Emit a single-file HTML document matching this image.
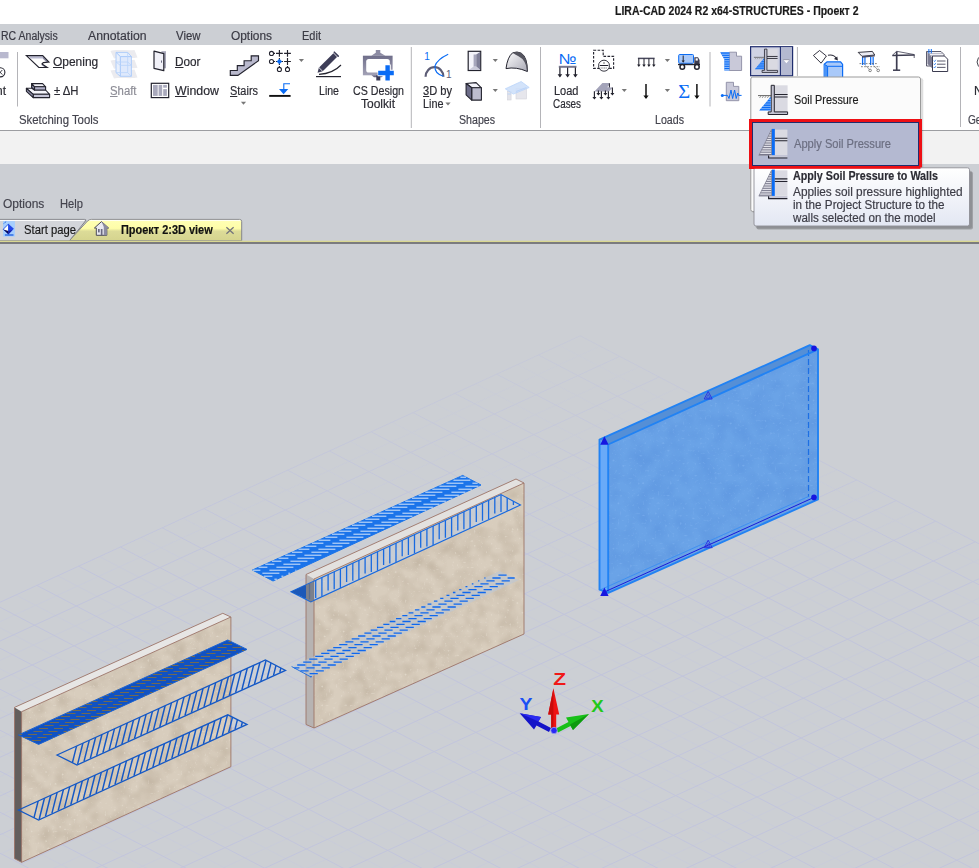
<!DOCTYPE html>
<html lang="en"><head><meta charset="utf-8"><title>LIRA-CAD 2024 R2 x64-STRUCTURES - Проект 2</title>
<style>
html,body{margin:0;padding:0}
body{width:979px;height:868px;position:relative;overflow:hidden;background:#fff;font:12px "Liberation Sans", sans-serif}
.a{position:absolute}
.t{position:absolute;white-space:pre;font-size:12px;line-height:normal;transform-origin:0 0;-webkit-text-stroke:0.18px currentColor}
.t u{text-decoration:underline;text-underline-offset:1px}
svg{position:absolute;overflow:visible}
</style></head><body>

<div class="a" style="left:0;top:24px;width:979px;height:21px;background:#cccfd4"></div>
<div class="a" style="left:0;top:45px;width:979px;height:85px;background:#fff"></div>
<div class="a" style="left:0;top:130px;width:979px;height:1px;background:#9c9da1"></div>
<div class="a" style="left:0;top:131px;width:979px;height:33px;background:#f2f2f2"></div>
<div class="a" style="left:0;top:164px;width:979px;height:704px;background:#cccfd4"></div>

<svg width="979" height="868" viewBox="0 0 979 868" style="left:0;top:0">
<defs><clipPath id="vp"><rect x="0" y="243" width="979" height="625"/></clipPath>
<filter id="nz" x="0" y="0" width="100%" height="100%" color-interpolation-filters="sRGB"><feTurbulence type="fractalNoise" baseFrequency="0.42" numOctaves="1" seed="3" result="n"/><feColorMatrix in="n" type="matrix" values="0 0 0 0 0.91  0 0 0 0 0.88  0 0 0 0 0.83  3 0 0 0 -1.9" result="w"/><feComposite in="w" in2="SourceGraphic" operator="in" result="wc"/><feTurbulence type="fractalNoise" baseFrequency="0.07" numOctaves="2" seed="8" result="n2"/><feColorMatrix in="n2" type="matrix" values="0 0 0 0 0.66  0 0 0 0 0.60  0 0 0 0 0.52  0 0.7 0 0 -0.24" result="d"/><feComposite in="d" in2="SourceGraphic" operator="in" result="dc"/><feMerge><feMergeNode in="SourceGraphic"/><feMergeNode in="dc"/><feMergeNode in="wc"/></feMerge></filter>
<filter id="nzb" x="0" y="0" width="100%" height="100%" color-interpolation-filters="sRGB"><feTurbulence type="fractalNoise" baseFrequency="0.4" numOctaves="1" seed="5" result="n"/><feColorMatrix in="n" type="matrix" values="0 0 0 0 0.50  0 0 0 0 0.70  0 0 0 0 0.94  3 0 0 0 -1.85" result="w"/><feComposite in="w" in2="SourceGraphic" operator="in" result="wc"/><feTurbulence type="fractalNoise" baseFrequency="0.06" numOctaves="2" seed="11" result="n2"/><feColorMatrix in="n2" type="matrix" values="0 0 0 0 0.30  0 0 0 0 0.52  0 0 0 0 0.84  0 0.6 0 0 -0.21" result="d"/><feComposite in="d" in2="SourceGraphic" operator="in" result="dc"/><feMerge><feMergeNode in="SourceGraphic"/><feMergeNode in="dc"/><feMergeNode in="wc"/></feMerge></filter>
<linearGradient id="fog" x1="0" y1="0" x2="0" y2="1"><stop offset="0" stop-color="#cccfd4" stop-opacity="0.7"/><stop offset="0.3" stop-color="#cccfd4" stop-opacity="0.5"/><stop offset="1" stop-color="#cccfd4" stop-opacity="0"/></linearGradient>
</defs>
<g clip-path="url(#vp)">
<path d="M559.3 345.4L1349.3 757.4M600.0 346.1L-236.0 730.1M517.5 364.6L1307.5 776.6M639.5 366.7L-196.5 750.7M475.7 383.8L1265.7 795.8M679.0 387.3L-157.0 771.3M433.9 403.0L1223.9 815.0M718.5 407.9L-117.5 791.9M392.1 422.2L1182.1 834.2M758.0 428.5L-78.0 812.5M350.3 441.4L1140.3 853.4M797.5 449.1L-38.5 833.1M308.5 460.6L1098.5 872.6M837.0 469.7L1.0 853.7M266.7 479.8L1056.7 891.8M876.5 490.3L40.5 874.3M224.9 499.0L1014.9 911.0M916.0 510.9L80.0 894.9M183.1 518.2L973.1 930.2M955.5 531.5L119.5 915.5M141.3 537.4L931.3 949.4M995.0 552.1L159.0 936.1M99.5 556.6L889.5 968.6M1034.5 572.7L198.5 956.7M57.7 575.8L847.7 987.8M1074.0 593.3L238.0 977.3M15.9 595.0L805.9 1007.0M1113.5 613.9L277.5 997.9M-25.9 614.2L764.1 1026.2M1153.0 634.5L317.0 1018.5M-67.7 633.4L722.3 1045.4M1192.5 655.1L356.5 1039.1M-109.5 652.6L680.5 1064.6M1232.0 675.7L396.0 1059.7M-151.3 671.8L638.7 1083.8M1271.5 696.3L435.5 1080.3M-193.1 691.0L596.9 1103.0M1311.0 716.9L475.0 1100.9M-234.9 710.2L555.1 1122.2M1350.5 737.5L514.5 1121.5" stroke="#c9ccd9" stroke-width="1" fill="none"/>
<path d="M580.2 335.8L1370.2 747.8M580.2 335.8L-255.8 719.8M538.4 355.0L1328.4 767.0M619.7 356.4L-216.3 740.4M496.6 374.2L1286.6 786.2M659.2 377.0L-176.8 761.0M454.8 393.4L1244.8 805.4M698.7 397.6L-137.3 781.6M413.0 412.6L1203.0 824.6M738.2 418.2L-97.8 802.2M371.2 431.8L1161.2 843.8M777.7 438.8L-58.3 822.8M329.4 451.0L1119.4 863.0M817.2 459.4L-18.8 843.4M287.6 470.2L1077.6 882.2M856.7 480.0L20.7 864.0M245.8 489.4L1035.8 901.4M896.2 500.6L60.2 884.6M204.0 508.6L994.0 920.6M935.7 521.2L99.7 905.2M162.2 527.8L952.2 939.8M975.2 541.8L139.2 925.8M120.4 547.0L910.4 959.0M1014.7 562.4L178.7 946.4M78.6 566.2L868.6 978.2M1054.2 583.0L218.2 967.0M36.8 585.4L826.8 997.4M1093.7 603.6L257.7 987.6M-5.0 604.6L785.0 1016.6M1133.2 624.2L297.2 1008.2M-46.8 623.8L743.2 1035.8M1172.7 644.8L336.7 1028.8M-88.6 643.0L701.4 1055.0M1212.2 665.4L376.2 1049.4M-130.4 662.2L659.6 1074.2M1251.7 686.0L415.7 1070.0M-172.2 681.4L617.8 1093.4M1291.2 706.6L455.2 1090.6M-214.0 700.6L576.0 1112.6M1330.7 727.2L494.7 1111.2M-255.8 719.8L534.2 1131.8M1370.2 747.8L534.2 1131.8" stroke="#c2c5dc" stroke-width="1" fill="none"/>
<rect x="0" y="243" width="979" height="330" fill="url(#fog)"/>
<clipPath id="c1"><polygon points="252.4,570.0 462.7,475.4 481.0,485.0 273.0,581.0"/></clipPath>
<polygon points="252.4,570.0 462.7,475.4 481.0,485.0 273.0,581.0" fill="#1b74ea" stroke="#1b74ea" stroke-width="1"/>
<path d="M460.4 477.2H466.1M453.4 480.2H470.4M446.4 483.2H463.4M472.4 483.2H477.6M439.4 486.2H456.4M465.4 486.2H478.4M432.4 489.2H449.4M458.4 489.2H471.9M425.4 492.2H442.4M451.4 492.2H465.4M418.7 495.2H435.4M444.4 495.2H458.9M412.0 498.2H428.4M437.4 498.2H452.4M405.3 501.2H421.4M430.4 501.2H445.9M398.7 504.2H414.4M423.4 504.2H439.4M392.0 507.2H407.4M416.4 507.2H432.9M385.3 510.2H400.4M409.4 510.2H426.4M378.7 513.2H393.4M402.4 513.2H419.4M372.0 516.2H386.4M395.4 516.2H412.4M365.3 519.2H379.4M388.4 519.2H405.4M358.7 522.2H372.4M381.4 522.2H398.4M352.0 525.2H365.4M374.4 525.2H391.4M345.3 528.2H358.4M367.4 528.2H384.4M338.7 531.2H351.4M360.4 531.2H377.4M332.0 534.2H344.4M353.4 534.2H370.4M325.3 537.2H337.4M346.4 537.2H363.4M318.6 540.2H330.4M339.4 540.2H356.4M312.0 543.2H323.4M332.4 543.2H349.4M305.3 546.2H316.4M325.4 546.2H342.4M298.6 549.2H309.4M318.4 549.2H335.4M292.0 552.2H302.4M311.4 552.2H328.4M285.3 555.2H295.4M304.4 555.2H321.4M278.6 558.2H288.4M297.4 558.2H314.4M272.0 561.2H281.4M290.4 561.2H307.4M265.3 564.2H274.4M283.4 564.2H300.4M258.6 567.2H267.4M276.4 567.2H293.4M252.8 570.2H260.4M269.4 570.2H286.4M295.4 570.2H296.4M262.4 573.2H279.4M288.4 573.2H289.9M264.0 576.2H272.4M281.4 576.2H283.4M274.4 579.2H276.9" stroke="#eef4fd" stroke-width="0.9" fill="none"/>
<polygon points="314.0,579.0 524.0,483.0 524.0,634.0 314.0,728.0" fill="#d8cdbd" filter="url(#nz)"/><polygon points="306.0,574.5 516.0,479.0 524.0,483.0 314.0,579.0" fill="#e3e1df"/><polygon points="306.0,574.5 314.0,579.0 314.0,728.0 306.0,724.5" fill="#b7b3b2"/><path d="M306.0,574.5L516.0,479.0L524.0,483.0L524.0,634.0L314.0,728.0L306.0,724.5Z M314.0,579.0L524.0,483.0 M314.0,579.0L314.0,728.0" fill="none" stroke="#9c7468" stroke-width="0.9"/>
<clipPath id="c2"><polygon points="291.0,591.8 501.0,494.6 520.5,505.0 310.8,601.8"/></clipPath>
<polygon points="291.0,591.8 501.0,494.6 520.5,505.0 310.8,601.8" fill="rgba(190,205,226,0.6)" stroke="#1769e0" stroke-width="1.1"/>
<path d="M297.2 587.9v18.5M303.4 585.1v20.0M309.5 582.2v17.0M315.7 579.4v18.5M321.9 576.5v20.0M328.1 573.6v17.0M334.2 570.8v18.5M340.4 567.9v20.0M346.6 565.1v17.0M352.8 562.2v18.5M358.9 559.4v20.0M365.1 556.5v17.0M371.3 553.6v18.5M377.5 550.8v20.0M383.6 547.9v17.0M389.8 545.1v18.5M396.0 542.2v20.0M402.2 539.3v17.0M408.4 536.5v18.5M414.5 533.6v20.0M420.7 530.8v17.0M426.9 527.9v18.5M433.1 525.0v20.0M439.2 522.2v17.0M445.4 519.3v18.5M451.6 516.5v20.0M457.8 513.6v17.0M463.9 510.8v18.5M470.1 507.9v20.0M476.3 505.0v17.0M482.5 502.2v18.5M488.6 499.3v20.0M494.8 496.5v17.0M501.0 493.6v18.5M507.2 490.7v20.0M513.4 487.9v17.0" stroke="#1769e0" stroke-width="1.3" fill="none" clip-path="url(#c2)"/>
<polygon points="291.0,591.8 306.0,585.0 306.0,598.8" fill="#1b58b8"/>
<polygon points="306.0,585.0 314.0,581.5 314.0,600.0 310.8,601.8 306.0,598.8" fill="#6b6f7a" opacity="0.8"/>
<clipPath id="c3"><polygon points="291.6,666.5 499.7,571.0 519.0,580.0 311.0,677.0"/></clipPath>
<polygon points="291.6,666.5 499.7,571.0 519.0,580.0 311.0,677.0" fill="rgba(186,198,214,0.6)"/>
<path d="M498.4 575.1H506.6M484.4 578.0H485.4M492.4 578.0H500.6M507.6 578.0H514.7M478.1 580.9H479.4M486.4 580.9H494.6M501.6 580.9H509.8M471.8 583.8H473.4M480.4 583.8H488.6M495.6 583.8H503.8M465.5 586.7H467.4M474.4 586.7H482.6M489.6 586.7H497.8M459.2 589.6H461.4M468.4 589.6H476.6M483.6 589.6H491.8M452.9 592.5H455.4M462.4 592.5H470.6M477.6 592.5H485.8M446.5 595.4H449.4M456.4 595.4H464.6M471.6 595.4H479.8M440.2 598.3H443.4M450.4 598.3H458.6M465.6 598.3H473.8M433.9 601.2H437.4M444.4 601.2H452.6M459.6 601.2H467.8M427.6 604.1H431.4M438.4 604.1H446.6M453.6 604.1H461.8M421.3 607.0H425.4M432.4 607.0H440.6M447.6 607.0H455.8M414.9 609.9H419.4M426.4 609.9H434.6M441.6 609.9H449.8M408.6 612.8H413.4M420.4 612.8H428.6M435.6 612.8H443.8M402.3 615.7H407.4M414.4 615.7H422.6M429.6 615.7H437.8M396.0 618.6H401.4M408.4 618.6H416.6M423.6 618.6H431.8M389.7 621.5H395.4M402.4 621.5H410.6M417.6 621.5H425.8M383.3 624.4H389.4M396.4 624.4H404.6M411.6 624.4H419.8M377.0 627.3H383.4M390.4 627.3H398.6M405.6 627.3H413.8M370.7 630.2H377.4M384.4 630.2H392.6M399.6 630.2H407.8M364.4 633.1H371.4M378.4 633.1H386.6M393.6 633.1H401.8M358.1 636.0H365.4M372.4 636.0H380.6M387.6 636.0H395.8M351.7 638.9H359.4M366.4 638.9H374.6M381.6 638.9H389.8M345.4 641.8H353.4M360.4 641.8H368.6M375.6 641.8H383.8M339.2 644.7H347.4M354.4 644.7H362.6M369.6 644.7H377.8M333.2 647.6H341.4M348.4 647.6H356.6M363.6 647.6H371.8M327.2 650.5H335.4M342.4 650.5H350.6M357.6 650.5H365.8M321.2 653.4H329.4M336.4 653.4H344.6M351.6 653.4H359.8M315.2 656.3H323.4M330.4 656.3H338.6M345.6 656.3H353.8M309.2 659.2H317.4M324.4 659.2H332.6M339.6 659.2H347.8M303.2 662.1H311.4M318.4 662.1H326.6M333.6 662.1H341.8M297.2 665.0H305.4M312.4 665.0H320.6M327.6 665.0H335.8M294.2 667.9H299.4M306.4 667.9H314.6M321.6 667.9H329.8M300.4 670.8H308.6M315.6 670.8H323.8M309.6 673.7H317.8M310.3 676.6H311.8" stroke="#0f68ee" stroke-width="1.3" fill="none"/>
<path d="M291.6,666.5L311.0,677.0" fill="none" stroke="#1769e0" stroke-width="0.9"/>
<polygon points="21.6,711.7 230.9,617.0 230.9,766.7 21.6,862.3" fill="#d8cdbd" filter="url(#nz)"/><polygon points="14.5,707.4 222.8,613.3 230.9,617.0 21.6,711.7" fill="#e7e6e5"/><polygon points="14.5,707.4 21.6,711.7 21.6,862.3 14.5,858.6" fill="#635e5d"/><path d="M14.5,707.4L222.8,613.3L230.9,617.0L230.9,766.7L21.6,862.3L14.5,858.6Z M21.6,711.7L230.9,617.0 M21.6,711.7L21.6,862.3" fill="none" stroke="#9c7468" stroke-width="0.9"/>
<clipPath id="ca"><polygon points="18.5,734.9 227.8,640.0 247.0,649.4 38.6,744.4"/></clipPath>
<polygon points="18.5,734.9 227.8,640.0 247.0,649.4 38.6,744.4" fill="#1152c2" stroke="#1a62d2" stroke-width="1"/>
<path d="M228.5 641.5H230.9M223.0 644.5H232.0M217.5 647.5H226.5M232.5 647.5H241.5M204.6 650.5H206.0M212.0 650.5H221.0M227.0 650.5H236.0M242.0 650.5H244.6M198.0 653.5H200.5M206.5 653.5H215.5M221.5 653.5H230.5M236.5 653.5H238.0M191.4 656.5H195.0M201.0 656.5H210.0M216.0 656.5H225.0M184.8 659.5H189.5M195.5 659.5H204.5M210.5 659.5H219.5M178.2 662.5H184.0M190.0 662.5H199.0M205.0 662.5H214.0M171.6 665.5H178.5M184.5 665.5H193.5M199.5 665.5H208.5M164.9 668.5H173.0M179.0 668.5H188.0M194.0 668.5H203.0M158.5 671.5H167.5M173.5 671.5H182.5M188.5 671.5H197.5M153.0 674.5H162.0M168.0 674.5H177.0M183.0 674.5H191.9M147.5 677.5H156.5M162.5 677.5H171.5M177.5 677.5H185.4M142.0 680.5H151.0M157.0 680.5H166.0M172.0 680.5H178.8M136.5 683.5H145.5M151.5 683.5H160.5M166.5 683.5H172.2M131.0 686.5H140.0M146.0 686.5H155.0M161.0 686.5H165.6M118.6 689.5H119.5M125.5 689.5H134.5M140.5 689.5H149.5M155.5 689.5H159.0M112.0 692.5H114.0M120.0 692.5H129.0M135.0 692.5H144.0M150.0 692.5H152.5M105.4 695.5H108.5M114.5 695.5H123.5M129.5 695.5H138.5M144.5 695.5H145.9M98.8 698.5H103.0M109.0 698.5H118.0M124.0 698.5H133.0M92.2 701.5H97.5M103.5 701.5H112.5M118.5 701.5H127.5M85.5 704.5H92.0M98.0 704.5H107.0M113.0 704.5H122.0M78.9 707.5H86.5M92.5 707.5H101.5M107.5 707.5H116.5M72.3 710.5H81.0M87.0 710.5H96.0M102.0 710.5H111.0M66.5 713.5H75.5M81.5 713.5H90.5M96.5 713.5H105.5M61.0 716.5H70.0M76.0 716.5H85.0M91.0 716.5H99.8M55.5 719.5H64.5M70.5 719.5H79.5M85.5 719.5H93.2M50.0 722.5H59.0M65.0 722.5H74.0M80.0 722.5H86.6M44.5 725.5H53.5M59.5 725.5H68.5M74.5 725.5H80.1M39.0 728.5H48.0M54.0 728.5H63.0M69.0 728.5H73.5M26.0 731.5H27.5M33.5 731.5H42.5M48.5 731.5H57.5M63.5 731.5H66.9M19.4 734.5H22.0M28.0 734.5H37.0M43.0 734.5H52.0M58.0 734.5H60.3M24.0 737.5H31.5M37.5 737.5H46.5M52.5 737.5H53.7M32.0 740.5H41.0" stroke="#7d6d45" stroke-width="0.9" fill="none"/>
<clipPath id="cb0"><polygon points="57.0,755.0 265.4,660.0 285.5,670.4 77.0,765.0"/></clipPath>
<path d="M71.3 767.1l6 -24M77.6 764.3l6 -24M84.0 761.4l6 -24M90.3 758.5l6 -24M96.6 755.7l6 -24M102.9 752.8l6 -24M109.2 749.9l6 -24M115.5 747.1l6 -24M121.9 744.2l6 -24M128.2 741.3l6 -24M134.5 738.5l6 -24M140.8 735.6l6 -24M147.1 732.7l6 -24M153.5 729.9l6 -24M159.8 727.0l6 -24M166.1 724.1l6 -24M172.4 721.3l6 -24M178.7 718.4l6 -24M185.0 715.5l6 -24M191.4 712.7l6 -24M197.7 709.8l6 -24M204.0 706.9l6 -24M210.3 704.1l6 -24M216.6 701.2l6 -24M223.0 698.3l6 -24M229.3 695.5l6 -24M235.6 692.6l6 -24M241.9 689.7l6 -24M248.2 686.9l6 -24M254.5 684.0l6 -24M260.9 681.1l6 -24M267.2 678.3l6 -24M273.5 675.4l6 -24M279.8 672.5l6 -24M286.1 669.7l6 -24" stroke="#1458c6" stroke-width="1.45" fill="none" clip-path="url(#cb0)"/>
<polygon points="57.0,755.0 265.4,660.0 285.5,670.4 77.0,765.0" fill="none" stroke="#1458c6" stroke-width="1.3"/>
<clipPath id="cb1"><polygon points="18.5,810.0 227.8,714.8 247.0,724.4 38.6,820.0"/></clipPath>
<path d="M32.9 822.1l6 -24M39.2 819.2l6 -24M45.5 816.3l6 -24M51.9 813.4l6 -24M58.2 810.5l6 -24M64.5 807.6l6 -24M70.8 804.7l6 -24M77.1 801.8l6 -24M83.4 798.9l6 -24M89.8 796.0l6 -24M96.1 793.1l6 -24M102.4 790.2l6 -24M108.7 787.3l6 -24M115.0 784.4l6 -24M121.3 781.5l6 -24M127.6 778.6l6 -24M134.0 775.8l6 -24M140.3 772.9l6 -24M146.6 770.0l6 -24M152.9 767.1l6 -24M159.2 764.2l6 -24M165.5 761.3l6 -24M171.8 758.4l6 -24M178.2 755.5l6 -24M184.5 752.6l6 -24M190.8 749.7l6 -24M197.1 746.8l6 -24M203.4 743.9l6 -24M209.7 741.0l6 -24M216.1 738.1l6 -24M222.4 735.2l6 -24M228.7 732.3l6 -24M235.0 729.4l6 -24M241.3 726.5l6 -24M247.6 723.6l6 -24" stroke="#1458c6" stroke-width="1.45" fill="none" clip-path="url(#cb1)"/>
<polygon points="18.5,810.0 227.8,714.8 247.0,724.4 38.6,820.0" fill="none" stroke="#1458c6" stroke-width="1.3"/>
<polygon points="608.2,444.5 818.0,349.4 818.0,499.4 608.2,592.9" fill="#6aa3e7" filter="url(#nzb)"/>
<polygon points="599.5,439.7 809.8,345.2 818.0,349.4 608.2,444.5" fill="#558fd6"/>
<polygon points="599.5,439.7 608.2,444.5 608.2,592.9 599.5,589.7" fill="#69aaf8"/>
<path d="M808.5 350V497" stroke="#1d6fe3" stroke-width="1.2" stroke-dasharray="6 3" fill="none"/>
<path d="M808.5 496.5L601 589.5" stroke="#3f90f2" stroke-width="1" fill="none"/>
<path d="M599.5,439.7L809.8,345.2L818.0,349.4L818.0,499.4L608.2,592.9L599.5,589.7Z M608.2,444.5L818.0,349.4 M608.2,444.5L608.2,592.9" fill="none" stroke="#2182f3" stroke-width="1.9" stroke-linejoin="round"/>
<path d="M604.4 592L813.4 497.7" stroke="#1a1ad8" stroke-width="1" fill="none"/>
<polygon points="604.4,436.3 608.6,444.8 600.2,444.8" fill="#1616e0"/>
<polygon points="604.4,587.5 608.6,596.0 600.2,596.0" fill="#1616e0"/>
<circle cx="814" cy="348.4" r="2.8" fill="#1616e0"/>
<circle cx="814" cy="497.4" r="2.8" fill="#1616e0"/>
<polygon points="708.2,391.5 712.2,399.0 704.2,399.0" fill="none" stroke="#2a2ae0" stroke-width="0.9"/><polygon points="708.2,394.5 710.0,398.0 706.4,398.0" fill="none" stroke="#2a2ae0" stroke-width="0.6"/>
<polygon points="708.2,540.2 712.2,547.7 704.2,547.7" fill="none" stroke="#2a2ae0" stroke-width="0.9"/><polygon points="708.2,543.2 710.0,546.7 706.4,546.7" fill="none" stroke="#2a2ae0" stroke-width="0.6"/>
<polygon points="519.7,713.3 541.0,717.0 538.5,721.5 551.0,728.0 549.0,732.0 536.5,725.5 534.0,729.5" fill="#1414c8"/>
<polygon points="519.7,713.3 541.0,717.0 538.5,721.5" fill="#2a2af0"/>
<polygon points="589.0,714.0 566.0,717.5 568.5,722.0 556.0,728.5 558.0,732.5 570.5,726.0 573.0,730.0" fill="#18c018"/>
<polygon points="589.0,714.0 573.0,730.0 570.0,724.5" fill="#0e9a0e"/>
<polygon points="553.4,688.2 548.2,714.5 551.2,714.5 551.2,729.0 556.2,729.0 556.2,714.5 559.2,714.5" fill="#ee1414"/>
<polygon points="553.4,688.2 553.4,729.0 551.2,729.0 551.2,714.5 548.2,714.5" fill="#c80c0c"/>
<circle cx="554" cy="730.5" r="3.2" fill="#2a2af5" stroke="#9aa0f0" stroke-width="0.8"/>
<text x="553.2" y="685.2" font-family="Liberation Sans, sans-serif" font-weight="bold" font-size="16.5" fill="#f01818" textLength="12.8" lengthAdjust="spacingAndGlyphs">Z</text>
<text x="591.2" y="711.6" font-family="Liberation Sans, sans-serif" font-weight="bold" font-size="16" fill="#22c81a" textLength="12.4" lengthAdjust="spacingAndGlyphs">X</text>
<text x="519.6" y="709.8" font-family="Liberation Sans, sans-serif" font-weight="bold" font-size="16" fill="#1a50f5" textLength="13" lengthAdjust="spacingAndGlyphs">Y</text>
</g></svg>
<svg width="979" height="868" viewBox="0 0 979 868" style="left:0;top:0">
<defs><linearGradient id="tipg" x1="0" y1="0" x2="0" y2="1"><stop offset="0" stop-color="#ffffff"/><stop offset="1" stop-color="#e3e7f3"/></linearGradient><linearGradient id="tabg" x1="0" y1="0" x2="0" y2="1"><stop offset="0" stop-color="#ffffb6"/><stop offset="0.42" stop-color="#fefda8"/><stop offset="0.55" stop-color="#dcdb98"/><stop offset="1" stop-color="#d5d48e"/></linearGradient><linearGradient id="csg" x1="0" y1="0" x2="0" y2="1"><stop offset="0" stop-color="#6f6e8a"/><stop offset="1" stop-color="#a3a2b6"/></linearGradient><linearGradient id="domeg" x1="0" y1="0" x2="1" y2="1"><stop offset="0" stop-color="#ffffff"/><stop offset="1" stop-color="#a9a9b5"/></linearGradient></defs>
<path d="M17.5 52V106.5M710 52V106.5" stroke="#b4b4b8" stroke-width="1" fill="none"/>
<path d="M411.3 47V128M540.5 47V128M960.5 47V127M797.4 47V76" stroke="#b4b4b8" stroke-width="1" fill="none"/>
<rect x="-1" y="52" width="9.5" height="6.3" fill="#b9b9cf"/>
<circle cx="0.3" cy="72.3" r="4.6" fill="#fff" stroke="#23232e" stroke-width="1.1"/><path d="M-2 70L2.3 74.6M2.3 70L-2 74.6" stroke="#23232e" stroke-width="0.9"/>
<polygon points="28.5,56.3 42.7,56.3 45,58.6 30.8,58.6" fill="#b9b9d0"/>
<polygon points="42.7,56.3 48.5,62 46.5,62.3 43,58.8" fill="#8c8ca6"/>
<polygon points="42.2,64 47.2,67.5 45,67.5 41.5,65" fill="#8c8ca6"/>
<path d="M26.4 55.6H42.7L48.9 62L43.3 62.6L42 64L47.2 67.5H38.8Z" fill="none" stroke="#23232e" stroke-width="1.15" stroke-linejoin="miter"/>
<polygon points="26.4,88.3 32,88.3 34.5,90 45.6,90 49.6,94.3 33.2,94.3" fill="#f4f4fa" stroke="#23232e" stroke-width="1.1" stroke-linejoin="round"/>
<polygon points="33.2,94.3 49.6,94.3 49.6,97.6 33.2,97.6" fill="#c6c6d8" stroke="#23232e" stroke-width="1.1" stroke-linejoin="round"/>
<polygon points="26.4,88.3 33.2,94.3 33.2,97.6 26.4,91.3" fill="#8c8ca6" stroke="#23232e" stroke-width="1.1" stroke-linejoin="round"/>
<polygon points="31.6,83.6 42.6,83.6 45.6,86.8 34.5,86.8" fill="#f4f4fa" stroke="#23232e" stroke-width="1.1" stroke-linejoin="round"/>
<polygon points="34.5,86.8 45.6,86.8 45.6,90 34.5,90" fill="#b0b0c8" stroke="#23232e" stroke-width="1.1" stroke-linejoin="round"/>
<polygon points="31.6,83.6 34.5,86.8 34.5,90 31.6,87.5" fill="#8c8ca6" stroke="#23232e" stroke-width="1.1" stroke-linejoin="round"/>
<path d="M110.5 51C116 49 128 51 134.5 50L137.5 57.5C131 59.0 120 57.0 114 58.5Z" fill="#ebebef"/>
<path d="M110.5 60.8C116 58.8 128 60.8 134.5 59.8L137.5 67.8C131 69.3 120 67.3 114 68.8Z" fill="#ebebef"/>
<path d="M110.5 70.6C116 68.6 128 70.6 134.5 69.6L137.5 77.6C131 79.1 120 77.1 114 78.6Z" fill="#ebebef"/>
<polygon points="116,52.4 127.7,52.4 131.4,56.6 120.3,56.6" fill="#e6effd" stroke="#a9c9f9" stroke-width="0.9"/>
<polygon points="120.3,56.6 131.4,56.6 131.4,76.3 120.3,76.3" fill="#dfe9fc" stroke="#a9c9f9" stroke-width="0.9"/>
<polygon points="116,52.4 120.3,56.6 120.3,76.3 116,72.6" fill="#e8effc" stroke="#a9c9f9" stroke-width="0.9"/>
<path d="M116 62L120.3 65.4H131.4M116 72.6H127.7L131.4 76.3M127.7 52.4V72.6M116 62H127.7L131.4 65.4" stroke="#b9d3fa" stroke-width="0.8" fill="none"/>
<rect x="161.4" y="51.2" width="4.6" height="17.1" fill="#a9a9ba"/>
<polygon points="154,51.2 163.8,53.6 163.8,70.7 154,68.3" fill="#f1f1f8" stroke="#23232e" stroke-width="1.2" stroke-linejoin="round"/>
<rect x="161.1" y="60.5" width="0.9" height="2.2" fill="#5a5a70"/>
<rect x="151.3" y="83.3" width="17.4" height="14.3" fill="#fff" stroke="#23232e" stroke-width="1.2"/>
<rect x="153" y="84.9" width="4.7" height="11" fill="#a9a9bc"/><rect x="158.6" y="84.9" width="3.6" height="11" fill="#a9a9bc"/><rect x="163.2" y="84.9" width="3.7" height="2.8" fill="#a9a9bc"/><rect x="163.2" y="89.1" width="3.7" height="6.8" fill="#a9a9bc"/>
<polygon points="230.3,70.5 237.3,70.5 237.3,65.6 244.1,65.6 244.1,60.7 251.2,60.7 251.2,55.8 258.5,55.8 258.5,60.7 237.9,75.4 230.3,75.4" fill="#b9b9cd" stroke="#23232e" stroke-width="1.15" stroke-linejoin="miter"/>
<polygon points="240.9,101.8 246.1,101.8 243.5,104.8" fill="#777"/>
<path d="M276.0 53.4H282.79999999999995M279.4 50.0V56.8M284.1 53.4H290.9M287.5 50.0V56.8M284.1 61.5H290.9M287.5 58.1V64.9M275.9 61.5H283M279.4 57.9V65M273.6 53.4H275M273.6 61.5H275M279.4 66V67.2M287.5 66V67.2" stroke="#23232e" stroke-width="1.15" fill="none"/>
<circle cx="271.5" cy="53.4" r="2.05" fill="#fff" stroke="#23232e" stroke-width="1.05"/>
<circle cx="271.5" cy="61.5" r="2.05" fill="#fff" stroke="#23232e" stroke-width="1.05"/>
<circle cx="279.4" cy="69.4" r="2.05" fill="#fff" stroke="#23232e" stroke-width="1.05"/>
<circle cx="287.5" cy="69.4" r="2.05" fill="#fff" stroke="#23232e" stroke-width="1.05"/>
<polygon points="279.4,58.8 282.1,61.5 279.4,64.2 276.7,61.5" fill="#0a6cf5"/>
<polygon points="298.8,58.9 304.0,58.9 301.4,61.9" fill="#777"/>
<path d="M269.2 95.9H290.6" stroke="#111" stroke-width="1.9" fill="none"/>
<path d="M290 83.7H283.8V90" stroke="#0a6cf5" stroke-width="1.1" fill="none"/><polygon points="279,88.9 288.3,88.9 283.6,94.2" fill="#0a6cf5"/>
<path d="M320.9 69.3L335.2 55.2" stroke="#3d3d57" stroke-width="5.2" stroke-linecap="butt" fill="none"/>
<path d="M334.3 52.2L338.2 56.1" stroke="#3d3d57" stroke-width="1.6" stroke-linecap="round" fill="none"/>
<path d="M335.2 55.2L336.3 54.1" stroke="#fff" stroke-width="5.2" fill="none" opacity="0"/>
<polygon points="318.9,67.4 322.7,71.2 317.6,72.8" fill="#3d3d57"/>
<path d="M318.9 67.6L322.5 71.2" stroke="#fff" stroke-width="0.7"/>
<path d="M319 74.4Q333 73.5 341 65" stroke="#23232e" stroke-width="1.1" fill="none"/>
<path d="M316 76.6H341" stroke="#23232e" stroke-width="1.2" fill="none"/>
<polygon points="375.8,50 380.3,50 380.3,52.8 385.3,55.7 371.3,55.7 375.8,52.8" fill="#8c8ba3"/>
<rect x="362.9" y="55.7" width="29.7" height="19.6" fill="url(#csg)"/>
<rect x="366.2" y="59" width="23.6" height="13.5" rx="2.6" fill="#fff"/>
<polygon points="371.5,75.3 384,75.3 381.5,77.3 374,77.3" fill="#6b6a86"/>
<rect x="376.3" y="75.3" width="4" height="5.2" fill="#3a3a55"/>
<path d="M387.6 64.6V81M377.6 73H394.4" stroke="#fff" stroke-width="6.4" fill="none"/>
<path d="M387.6 65.2V80.6M378.2 73H393.8" stroke="#0a6cf5" stroke-width="4.4" fill="none"/>
<path d="M425.6 76.8A8.9 9.6 0 0 1 443.4 76.8" stroke="#5d5d76" stroke-width="2.2" fill="none"/>
<path d="M448.2 54.3Q437 59.5 434.9 66.2Q434.5 73.5 443.3 76.2" stroke="#0a6cf5" stroke-width="1.1" fill="none"/>
<text x="424.3" y="59.8" font-family="Liberation Sans, sans-serif" font-size="10" fill="#0a6cf5">1</text>
<text x="446" y="77.6" font-family="Liberation Sans, sans-serif" font-size="10" fill="#5d5d76">1</text>
<polygon points="445.4,102.4 450.6,102.4 448.0,105.4" fill="#777"/>
<rect x="468.2" y="51.3" width="12.5" height="19.2" fill="#f3f3fa" stroke="#23232e" stroke-width="1.2"/>
<polygon points="480.1,51.9 480.1,69.9 476.2,66.5 476.2,54.5" fill="#7f7f98"/>
<polygon points="468.8,69.9 480.1,69.9 476.2,66.5 473.6,66.5" fill="#c9c9d9"/>
<rect x="473.6" y="54.5" width="2.6" height="12" fill="#a6a6bc"/>
<polygon points="492.7,58.9 497.9,58.9 495.3,61.9" fill="#777"/>
<path d="M506 68.6Q507.5 57 512.6 52.8Q517 51 521.4 53.2Q527.5 57.5 527.4 71.5Q516 66.5 506 68.6Z" fill="url(#domeg)" stroke="#23232e" stroke-width="1"/>
<path d="M512.6 52.8Q517 51 521.4 53.2Q527.5 57.5 527.4 71.5Q526 60 518.5 56.3Q515 54.5 512.6 52.8Z" fill="#55555f"/>
<polygon points="466.1,83.5 476.1,82.6 481.4,87.8 471.7,87.8" fill="#f3f3fa" stroke="#23232e" stroke-width="1.1" stroke-linejoin="round"/>
<polygon points="471.7,87.8 481.4,87.8 481.4,100.1 471.7,100.1" fill="#bcbccf" stroke="#23232e" stroke-width="1.1" stroke-linejoin="round"/>
<polygon points="466.1,83.5 471.7,87.8 471.7,100.1 466.1,94.8" fill="#6c6c88" stroke="#23232e" stroke-width="1.1" stroke-linejoin="round"/>
<polygon points="492.7,89.0 497.9,89.0 495.3,92.0" fill="#777"/>
<rect x="516" y="88.5" width="10.5" height="10.5" fill="#e6e6ec" stroke="#d2d2da" stroke-width="0.6"/><rect x="507.5" y="91.5" width="3.6" height="8.5" fill="#e4e4ea" stroke="#d2d2da" stroke-width="0.6"/>
<polygon points="505.3,88.8 521.2,81.5 529.2,87.5 513.3,94.1" fill="#cfe0fa" stroke="#b4d0fa" stroke-width="0.8" opacity="0.9"/>
<path d="M516 91.5L526.5 87.5M507.5 94H511" stroke="#b4d0fa" stroke-width="0.8" fill="none"/>
<text x="558.8" y="63.8" font-family="Liberation Sans, sans-serif" font-size="14.5" fill="#0a6cf5" textLength="18" lengthAdjust="spacingAndGlyphs">№</text>
<path d="M558.8 66.8H576.5" stroke="#77778e" stroke-width="2" fill="none"/>
<path d="M559.9 67.5V76.4" stroke="#23232e" stroke-width="1.2" fill="none"/><polygon points="557.6,74.2 562.1999999999999,74.2 559.9,77.4" fill="#23232e"/>
<path d="M567.6 67.5V76.4" stroke="#23232e" stroke-width="1.2" fill="none"/><polygon points="565.3000000000001,74.2 569.9,74.2 567.6,77.4" fill="#23232e"/>
<path d="M575.4 67.5V76.4" stroke="#23232e" stroke-width="1.2" fill="none"/><polygon points="573.1,74.2 577.6999999999999,74.2 575.4,77.4" fill="#23232e"/>
<path d="M593.6 50.2H603.2V56.3H613.6V68.4H593.6Z" fill="none" stroke="#23232e" stroke-width="1.15" stroke-dasharray="2.6 1.4"/>
<circle cx="604" cy="65.7" r="5.5" fill="#fff" stroke="#23232e" stroke-width="0.9"/><path d="M599.7 65.5H608.3" stroke="#23232e" stroke-width="1"/><path d="M600.6 68H607.4" stroke="#777" stroke-width="0.9" stroke-dasharray="1.2 0.5"/><path d="M603.2 62.2L604.8 63.8M604.8 62.2L603.2 63.8" stroke="#666" stroke-width="0.6"/>
<path d="M637.9 58.4H654.6" stroke="#4a4a5e" stroke-width="1.5" fill="none"/>
<path d="M638.8 58.5V66" stroke="#23232e" stroke-width="1" fill="none"/><polygon points="637.0999999999999,64.4 640.5,64.4 638.8,67" fill="#23232e"/>
<path d="M644 58.5V66" stroke="#23232e" stroke-width="1" fill="none"/><polygon points="642.3,64.4 645.7,64.4 644,67" fill="#23232e"/>
<path d="M648.9 58.5V66" stroke="#23232e" stroke-width="1" fill="none"/><polygon points="647.1999999999999,64.4 650.6,64.4 648.9,67" fill="#23232e"/>
<path d="M653.8 58.5V66" stroke="#23232e" stroke-width="1" fill="none"/><polygon points="652.0999999999999,64.4 655.5,64.4 653.8,67" fill="#23232e"/>
<polygon points="664.8,58.9 670.0,58.9 667.4,61.9" fill="#777"/>
<rect x="678.7" y="54.5" width="14.8" height="8.8" rx="1" fill="#a9c9f9" stroke="#0a6cf5" stroke-width="1"/>
<path d="M694.3 57.3H698L699.6 60V64.2H694.3Z" fill="#3c3c50"/><rect x="695.6" y="58.3" width="2.2" height="2.3" fill="#fff"/>
<path d="M678 64.5H700" stroke="#23232e" stroke-width="1.4"/>
<path d="M683.2 55.5V61.8" stroke="#23232e" stroke-width="1" fill="none"/><polygon points="681.6,60.4 684.8000000000001,60.4 683.2,62.8" fill="#23232e"/>
<circle cx="682.3" cy="66.9" r="2.3" fill="#fff" stroke="#23232e" stroke-width="1.5"/>
<circle cx="696.9" cy="66.9" r="2.3" fill="#fff" stroke="#23232e" stroke-width="1.5"/>
<polygon points="594.4,91.5 602.4,83.1 609.7,83.1 609.7,87.4 612.6,87.4 609,91.5" fill="#a3a3b9"/>
<polygon points="607.2,87.2 609.2,85 609.2,87.2" fill="#fff"/>
<path d="M598.4 90.5V94.6" stroke="#23232e" stroke-width="1.15" fill="none"/><polygon points="596.4,93.0 600.4,93.0 598.4,95.6" fill="#23232e"/>
<path d="M605.4 90.5V94.6" stroke="#23232e" stroke-width="1.15" fill="none"/><polygon points="603.4,93.0 607.4,93.0 605.4,95.6" fill="#23232e"/>
<path d="M612.4 87.5V94.6" stroke="#23232e" stroke-width="1.15" fill="none"/><polygon points="610.4,93.0 614.4,93.0 612.4,95.6" fill="#23232e"/>
<path d="M609.4 83.3V87.4" stroke="#23232e" stroke-width="1"/>
<path d="M594.4 91.3V98.6" stroke="#23232e" stroke-width="1.15" fill="none"/><polygon points="592.4,97.0 596.4,97.0 594.4,99.6" fill="#23232e"/>
<path d="M601.4 91.3V98.6" stroke="#23232e" stroke-width="1.15" fill="none"/><polygon points="599.4,97.0 603.4,97.0 601.4,99.6" fill="#23232e"/>
<path d="M608.4 91.3V98.6" stroke="#23232e" stroke-width="1.15" fill="none"/><polygon points="606.4,97.0 610.4,97.0 608.4,99.6" fill="#23232e"/>
<polygon points="621.7,89.1 626.9,89.1 624.3,92.1" fill="#777"/>
<path d="M646 84V98" stroke="#111" stroke-width="1.5" fill="none"/><polygon points="643.4,95.4 648.6,95.4 646,99" fill="#111"/>
<polygon points="664.8,89.1 670.0,89.1 667.4,92.1" fill="#777"/>
<text x="678.3" y="98" font-family="Liberation Serif, serif" font-size="19" fill="#0a6cf5" textLength="12" lengthAdjust="spacingAndGlyphs">Σ</text>
<path d="M696.9 84V98" stroke="#111" stroke-width="1.5" fill="none"/><polygon points="694.3,95.4 699.5,95.4 696.9,99" fill="#111"/>
<polygon points="729.4,52.2 736.5,52.2 736.5,56.2 741.6,56.2 741.6,70.5 729.4,70.5" fill="#c9c9d9" stroke="#8c8ca4" stroke-width="0.9"/>
<polygon points="720.2,52.2 729.4,52.2 729.4,70.5 724.3,70.5 724.3,59.3" fill="#0a6cf5"/>
<path d="M721.4 54.2H729.4M722.6 56.4H729.4M723.9 58.6H729.4M724.3 60.8H729.4M724.3 63.0H729.4M724.3 65.2H729.4M724.3 67.4H729.4M724.3 69.6H729.4" stroke="#d9e8ff" stroke-width="0.7" fill="none"/>
<polygon points="726.3,82.3 733.5,82.3 733.5,86.4 738.8,86.4 738.8,100.7 726.3,100.7" fill="#c9c9d9" stroke="#8c8ca4" stroke-width="0.9"/>
<path d="M722.2 95.4H727.5L729 98.5L731 90L732.6 98.5L734.6 90L736.2 98.5L737.8 93L738.6 95.4H741.6" stroke="#0a6cf5" stroke-width="1" fill="none" stroke-linejoin="round"/><circle cx="722.3" cy="95.4" r="1.5" fill="#0a6cf5"/>
<rect x="750.6" y="46.7" width="42" height="29" fill="#cfd2e3" stroke="#1f2d6e" stroke-width="1.2"/>
<rect x="780.6" y="47.3" width="11.4" height="27.8" fill="#b4b9d1"/>
<path d="M780.4 46.7V75.7" stroke="#1f2d6e" stroke-width="1.1"/>
<polygon points="783.6,59.9 789.2,59.9 786.4,63.2" fill="#fff"/><path d="M783.3 59.7H789.5" stroke="#8a8a96" stroke-width="0.7"/>
<g transform="translate(753.9 49.1) scale(0.8)"><rect x="16.3" y="0.0" width="13.3" height="26.6" fill="#dadae2"/><path d="M16.3 9.2H29.6M16.3 11.7H29.6" stroke="#23232e" stroke-width="1.10" fill="none"/><path d="M13.2 0.0H16.3V26.6H29.6V29.2H10.2V26.6H13.2Z" fill="#c4c4d2" stroke="#23232e" stroke-width="1.00"/><path d="M0.0 10.3H13.2" stroke="#555" stroke-width="0.90" fill="none"/><path d="M2.9 10.7L1.5 12.7M5.5 10.7L4.1 12.7M8.1 10.7L6.7 12.7M10.7 10.7L9.3 12.7M13.3 10.7L11.9 12.7" stroke="#777" stroke-width="0.70" fill="none"/><polygon points="12.7,11.5 12.7,25.3 1.2,25.3" fill="#0a6cf5"/><path d="M10.5 14.2H12.7M8.5 16.5H12.7M6.6 18.8H12.7M4.7 21.1H12.7M2.8 23.4H12.7" stroke="#cfe2ff" stroke-width="0.60" fill="none" /></g>
<polygon points="813.4,55.5 819.6,50.5 826.4,56 821.1,63.2" fill="#fff" stroke="#2a2a38" stroke-width="0.95"/>
<path d="M828 55.3Q833.6 54 836.6 58.6" stroke="#2a2a38" stroke-width="1.15" fill="none"/><polygon points="837.9,60.6 833.9,58.9 837.3,56.4" fill="#2a2a38"/>
<path d="M824.2 64.2L827.2 61.8H840.6L842.6 64.4V77.5H824.2Z" fill="#a9c9f9" stroke="#0a6cf5" stroke-width="1.2" stroke-linejoin="round"/>
<polygon points="824.2,64.2 827.6,66.3 827.6,77.5 824.2,77.5" fill="#4a93f7"/>
<path d="M827.6 77.5V66.3L824.4 64.3M827.6 66.3H842.4" stroke="#0a6cf5" stroke-width="1" fill="none"/>
<rect x="862.5" y="57" width="2.5" height="7.7" fill="#cfe0ff"/><rect x="870.6" y="57" width="2.6" height="7.7" fill="#cfe0ff"/>
<path d="M862.5 57V64.9M865 57V64.9M870.6 57V64.9M873.2 57V64.9" stroke="#0a6cf5" stroke-width="1.1" fill="none"/>
<path d="M859.5 63.6H877M861 66.7H880" stroke="#555" stroke-width="0.7" stroke-dasharray="1.8 1.3" fill="none"/>
<polygon points="858.2,52.4 872.4,51.4 874.7,55 862,56.3" fill="#ececf3" stroke="#23232e" stroke-width="0.9" stroke-linejoin="round"/>
<polygon points="862,56.3 874.7,55 874.7,56.6 862,57.8" fill="#4a4a60"/>
<circle cx="870.1" cy="70.4" r="1.3" fill="none" stroke="#555" stroke-width="0.7"/><circle cx="878.2" cy="70.4" r="1.3" fill="none" stroke="#555" stroke-width="0.7"/><path d="M865.5 65.5L869.3 69.5M873.7 65.5L877.4 69.5" stroke="#666" stroke-width="0.6"/>
<path d="M896.7 51.5V70" stroke="#3c3c50" stroke-width="1.7" fill="none"/><path d="M893 70.2H900.2" stroke="#3c3c50" stroke-width="1.5"/>
<path d="M892.3 55.6L914.6 55" stroke="#3c3c50" stroke-width="1.5" fill="none"/><path d="M892.5 55.2L896.7 51.3L914.4 54.6M914.2 55V58" stroke="#3c3c50" stroke-width="0.8" fill="none"/>
<path d="M926.5 51.5H941L944 54.5V66H926.5Z" fill="#f2f2f6" stroke="#4a4a5e" stroke-width="0.9"/>
<path d="M927.5 51.5L932.5 58V68.5L927.5 64Z" fill="#7c7c92"/>
<path d="M932.5 56H944.5L947.7 59.2V71.5H932.5Z" fill="#fff" stroke="#3c3c50" stroke-width="1"/>
<path d="M937 61H945.5M937 64.2H945.5M937 67.4H945.5" stroke="#4a4a5e" stroke-width="0.9"/><path d="M933.8 60.6L934.6 61.6L935.8 59.8M933.8 63.8L934.6 64.8L935.8 63M933.8 67L934.6 68L935.8 66.2" stroke="#0a6cf5" stroke-width="0.7" fill="none"/>
<path d="M928.9 49V53.5M931.3 49V53.5" stroke="#0a6cf5" stroke-width="1" fill="none"/>
<path d="M928 53.5H942M929 55.5H940" stroke="#9a9ab0" stroke-width="0.6"/>
<path d="M978.5 57.5Q975.6 62 978.5 66.5" stroke="#44444e" stroke-width="1" fill="none"/>
<rect x="752.3" y="78.2" width="171" height="135" rx="2" fill="#000" opacity="0.13"/>
<rect x="750.8" y="77" width="169.7" height="134.5" rx="2" fill="#fbfbfb" stroke="#9b9b9b" stroke-width="1"/>
<rect x="774.3" y="85.3" width="13.3" height="26.6" fill="#dadae2"/><path d="M774.3 94.5H787.6M774.3 97.0H787.6" stroke="#23232e" stroke-width="1.10" fill="none"/><path d="M771.2 85.3H774.3V111.9H787.6V114.5H768.2V111.9H771.2Z" fill="#c4c4d2" stroke="#23232e" stroke-width="1.00"/><path d="M758.0 95.6H771.2" stroke="#555" stroke-width="0.90" fill="none"/><path d="M760.9 96.0L759.5 98.0M763.5 96.0L762.1 98.0M766.1 96.0L764.7 98.0M768.7 96.0L767.3 98.0M771.3 96.0L769.9 98.0" stroke="#777" stroke-width="0.70" fill="none"/><polygon points="770.7,96.8 770.7,110.6 759.2,110.6" fill="#0a6cf5"/><path d="M768.5 99.5H770.7M766.5 101.8H770.7M764.6 104.1H770.7M762.7 106.4H770.7M760.8 108.7H770.7" stroke="#cfe2ff" stroke-width="0.60" fill="none" />
<rect x="752.5" y="122.5" width="166" height="43" fill="#b4b9d1" stroke="#1f2d6e" stroke-width="1"/>
<rect x="750.5" y="120.5" width="170" height="47" fill="none" stroke="#ee0f14" stroke-width="3"/>
<rect x="774.8" y="129.6" width="12.6" height="25.4" fill="#dadae2"/><polygon points="758.9,155.4 771.5,129.6 771.5,155.4" fill="#e2e2ea" stroke="#7c7c8c" stroke-width="0.7"/><path d="M770.6 131.5H771.5M769.4 133.8H771.5M768.3 136.1H771.5M767.2 138.4H771.5M766.1 140.7H771.5M765.0 143.0H771.5M763.8 145.3H771.5M762.7 147.6H771.5M761.6 149.9H771.5M760.5 152.2H771.5M759.3 154.5H771.5" stroke="#6c6c80" stroke-width="0.9" fill="none"/><rect x="771.9" y="128.9" width="2.9" height="26.9" fill="#0a6cf5"/><path d="M774.8 138.2H787.4M774.8 140.8H787.4" stroke="#23232e" stroke-width="1.1" fill="none"/><rect x="768.8" y="155.2" width="18.6" height="2.4" fill="#c8c8d6"/><path d="M768.6 155.5V158.0H787.4" stroke="#23232e" stroke-width="1.2" fill="none"/>
<rect x="756.5" y="171.5" width="216.5" height="58" rx="2" fill="#000" opacity="0.22"/>
<rect x="755.5" y="170.5" width="216.5" height="58" rx="2" fill="#000" opacity="0.10"/>
<rect x="754" y="167.8" width="215.5" height="58.2" rx="2" fill="url(#tipg)" stroke="#8e8e96" stroke-width="0.9"/>
<rect x="750.5" y="167" width="170" height="1.8" fill="#ee0f14"/>
<rect x="774.8" y="170.3" width="12.6" height="25.4" fill="#dadae2"/><polygon points="758.9,196.1 771.5,170.3 771.5,196.1" fill="#e2e2ea" stroke="#7c7c8c" stroke-width="0.7"/><path d="M770.6 172.2H771.5M769.4 174.5H771.5M768.3 176.8H771.5M767.2 179.1H771.5M766.1 181.4H771.5M765.0 183.7H771.5M763.8 186.0H771.5M762.7 188.3H771.5M761.6 190.6H771.5M760.5 192.9H771.5M759.3 195.2H771.5" stroke="#6c6c80" stroke-width="0.9" fill="none"/><rect x="771.9" y="169.6" width="2.9" height="26.9" fill="#0a6cf5"/><path d="M774.8 178.9H787.4M774.8 181.5H787.4" stroke="#23232e" stroke-width="1.1" fill="none"/><rect x="768.8" y="195.9" width="18.6" height="2.4" fill="#c8c8d6"/><path d="M768.6 196.2V198.7H787.4" stroke="#23232e" stroke-width="1.2" fill="none"/>
<path d="M-3 219.4H84.5Q86.5 219.4 85.5 220.9L69.5 240.8H-3Z" fill="#d3d5da" stroke="#7f8085" stroke-width="1"/><path d="M0 220.4H84.5" stroke="#fff" stroke-width="1"/>
<path d="M69.5 240.5L87.5 221Q89 219.4 91.5 219.4H239.5Q241.7 219.4 241.7 221.6V240.8Z" fill="url(#tabg)" stroke="#86878c" stroke-width="1"/>
<rect x="0" y="240.7" width="979" height="1.6" fill="#d9d892"/><rect x="0" y="242.2" width="979" height="1.6" fill="#66676b"/>
<path d="M89.5 220.4H240.5" stroke="#fff" stroke-width="1" opacity="0.9"/>
<rect x="3" y="221.1" width="11.9" height="15.5" fill="#a6cefd"/>
<polygon points="3.2,229.3 8.6,223.9 8.5,234.2" fill="#fff" stroke="#1a48e0" stroke-width="0.9" stroke-linejoin="round"/>
<polygon points="8.6,223.9 13.9,228.8 8.5,234.2" fill="#2446e6"/>
<polygon points="3.4,229.6 8.5,231 8.5,234.2" fill="#0c0c55"/>
<polygon points="8.5,231 12.4,230 8.5,234.2" fill="#1420a8"/>
<path d="M4.9 235H13.5" stroke="#1a5ae0" stroke-width="1.3"/><path d="M3.6 223.6L6.6 221.3" stroke="#1a5ae0" stroke-width="0.9" stroke-dasharray="1.2 0.6"/>
<polygon points="101.5,221.6 108.6,228 106.8,228 106.8,235.3 96.3,235.3 96.3,228 94.4,228" fill="#e9e9f0" stroke="#4a4a58" stroke-width="1" stroke-linejoin="round"/>
<polygon points="101.5,221.6 108.6,228 106.8,228 106.8,235.3 103.8,235.3 103.8,227" fill="#8c8ca2"/>
<rect x="98" y="229" width="1.7" height="3.4" fill="#6a6a80"/><rect x="100.8" y="229" width="1.7" height="6" fill="#6a6a80"/>
<path d="M226.4 227.2L233.6 233.8M233.6 227.2L226.4 233.8" stroke="#74747c" stroke-width="1.3" fill="none"/>
</svg>
<span class="t" style="left:614.5px;top:4.1px;font-weight:bold;color:#1a1a1a;transform:scaleX(0.8741)">LIRA-CAD 2024 R2 x64-STRUCTURES - Проект 2</span>
<span class="t" style="left:0.8px;top:28.8px;font-weight:normal;color:#3a3a44;transform:scaleX(0.8765)">RC Analysis</span>
<span class="t" style="left:88.0px;top:28.8px;font-weight:normal;color:#3a3a44;transform:scaleX(1.0193)">Annotation</span>
<span class="t" style="left:176.0px;top:28.8px;font-weight:normal;color:#3a3a44;transform:scaleX(0.9497)">View</span>
<span class="t" style="left:230.5px;top:28.8px;font-weight:normal;color:#3a3a44;transform:scaleX(0.9913)">Options</span>
<span class="t" style="left:301.5px;top:28.8px;font-weight:normal;color:#3a3a44;transform:scaleX(0.9184)">Edit</span>
<span class="t" style="left:-4.4px;top:84.1px;font-weight:normal;color:#2b2b33;transform:scaleX(0.9984)">nt</span>
<span class="t" style="left:53.3px;top:54.6px;font-weight:normal;color:#2b2b33;transform:scaleX(0.9961)"><u>O</u>pening</span>
<span class="t" style="left:54.0px;top:84.1px;font-weight:normal;color:#2b2b33;transform:scaleX(0.9440)">± ΔH</span>
<span class="t" style="left:110.0px;top:84.1px;font-weight:normal;color:#8d8d96;transform:scaleX(0.9454)"><u>S</u>haft</span>
<span class="t" style="left:175.0px;top:54.6px;font-weight:normal;color:#2b2b33;transform:scaleX(0.9802)"><u>D</u>oor</span>
<span class="t" style="left:175.0px;top:84.1px;font-weight:normal;color:#2b2b33;transform:scaleX(1.0307)"><u>W</u>indow</span>
<span class="t" style="left:230.0px;top:84.1px;font-weight:normal;color:#2b2b33;transform:scaleX(0.9124)"><u>S</u>tairs</span>
<span class="t" style="left:318.5px;top:84.1px;font-weight:normal;color:#2b2b33;transform:scaleX(0.8815)">Line</span>
<span class="t" style="left:352.5px;top:84.1px;font-weight:normal;color:#2b2b33;transform:scaleX(0.8891)">CS Design</span>
<span class="t" style="left:361.0px;top:97.1px;font-weight:normal;color:#2b2b33;transform:scaleX(0.9995)">Toolkit</span>
<span class="t" style="left:423.0px;top:84.1px;font-weight:normal;color:#2b2b33;transform:scaleX(0.9248)"><u>3</u>D by</span>
<span class="t" style="left:423.0px;top:97.1px;font-weight:normal;color:#2b2b33;transform:scaleX(0.9036)">Line</span>
<span class="t" style="left:554.0px;top:84.1px;font-weight:normal;color:#2b2b33;transform:scaleX(0.9175)">Load</span>
<span class="t" style="left:552.5px;top:97.1px;font-weight:normal;color:#2b2b33;transform:scaleX(0.8232)">Cases</span>
<span class="t" style="left:974.3px;top:84.1px;font-weight:normal;color:#2b2b33;transform:scaleX(1.0032)">N</span>
<span class="t" style="left:18.5px;top:112.9px;font-weight:normal;color:#44444e;transform:scaleX(0.9482)">Sketching Tools</span>
<span class="t" style="left:458.5px;top:112.9px;font-weight:normal;color:#44444e;transform:scaleX(0.8845)">Shapes</span>
<span class="t" style="left:654.5px;top:112.9px;font-weight:normal;color:#44444e;transform:scaleX(0.8868)">Loads</span>
<span class="t" style="left:967.5px;top:112.9px;font-weight:normal;color:#44444e;transform:scaleX(0.8429)">Ge</span>
<span class="t" style="left:794.0px;top:92.8px;font-weight:normal;color:#1e1e1e;transform:scaleX(0.9037)">Soil Pressure</span>
<span class="t" style="left:794.0px;top:137.1px;font-weight:normal;color:#6b6e80;transform:scaleX(0.9263)">Apply Soil Pressure</span>
<span class="t" style="left:793.0px;top:168.9px;font-weight:bold;color:#2c2c34;transform:scaleX(0.8936)">Apply Soil Pressure to Walls</span>
<span class="t" style="left:793.0px;top:185.1px;font-weight:normal;color:#3c3c46;transform:scaleX(0.9854)">Applies soil pressure highlighted</span>
<span class="t" style="left:793.0px;top:198.1px;font-weight:normal;color:#3c3c46;transform:scaleX(0.9741)">in the Project Structure to the</span>
<span class="t" style="left:793.0px;top:211.1px;font-weight:normal;color:#3c3c46;transform:scaleX(0.9673)">walls selected on the model</span>
<span class="t" style="left:3.3px;top:196.8px;font-weight:normal;color:#44444e;transform:scaleX(0.9986)">Options</span>
<span class="t" style="left:60.3px;top:196.8px;font-weight:normal;color:#44444e;transform:scaleX(0.9276)">Help</span>
<span class="t" style="left:23.5px;top:222.9px;font-weight:normal;color:#1a1a1a;transform:scaleX(0.9391)">Start page</span>
<span class="t" style="left:121.3px;top:222.9px;font-weight:bold;color:#111;transform:scaleX(0.9120)">Проект 2:3D view</span>
</body></html>
